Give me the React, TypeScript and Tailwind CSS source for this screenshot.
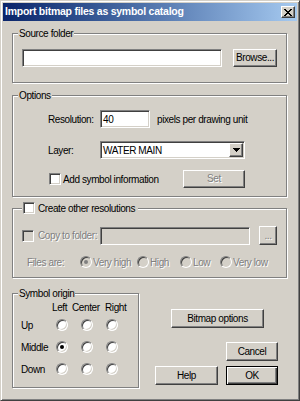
import React from 'react'

const face = 'bg-[#D4D0C8]'
const raised =
  'border border-t-white border-l-white border-r-[#404040] border-b-[#404040] shadow-[inset_-1px_-1px_0_#808080]'
const raisedDefault =
  'border border-black shadow-[inset_1px_1px_0_#fff,inset_-1px_-1px_0_#404040,inset_-2px_-2px_0_#808080]'
const sunken =
  'border border-t-[#808080] border-l-[#808080] border-r-white border-b-white shadow-[inset_1px_1px_0_#404040,inset_-1px_-1px_0_#D4D0C8]'
const disabledText = 'text-[#808080] [text-shadow:1px_1px_0_#fff]'

function Btn({
  children,
  className = '',
  disabled = false,
  isDefault = false,
}: {
  children: React.ReactNode
  className?: string
  disabled?: boolean
  isDefault?: boolean
}) {
  return (
    <button
      type="button"
      className={`flex items-center justify-center leading-none ${face} ${isDefault ? raisedDefault : raised} ${disabled ? disabledText : ''} ${className}`}
    >
      {children}
    </button>
  )
}

function Check({ disabled = false }: { disabled?: boolean }) {
  return (
    <span
      className={`block h-[12px] w-[12px] shrink-0 ${sunken} ${disabled ? face : 'bg-white'}`}
    />
  )
}

function Radio({ checked = false, disabled = false }: { checked?: boolean; disabled?: boolean }) {
  return (
    <span
      className={`flex h-[12px] w-[12px] shrink-0 items-center justify-center rounded-full border border-t-[#808080] border-l-[#808080] border-r-white border-b-white shadow-[inset_1px_1px_0_#404040,inset_-1px_-1px_0_#D4D0C8] ${disabled ? face : 'bg-white'}`}
    >
      {checked && (
        <span className={`block h-[4px] w-[4px] rounded-full ${disabled ? 'bg-[#808080]' : 'bg-black'}`} />
      )}
    </span>
  )
}

function Group({
  title,
  className = '',
  children,
}: {
  title: React.ReactNode
  className?: string
  children?: React.ReactNode
}) {
  return (
    <div
      className={`relative border border-[#808080] shadow-[inset_1px_1px_0_#fff,1px_1px_0_#fff] ${className}`}
    >
      <div className={`absolute left-[5px] top-[-8px] flex h-[14px] items-center px-[1px] ${face}`}>
        {title}
      </div>
      {children}
    </div>
  )
}

export default function App() {
  return (
    <div
      className={`h-[401px] w-[300px] ${face} border border-t-[#D4D0C8] border-l-[#D4D0C8] border-r-[#404040] border-b-[#404040] p-[2px] shadow-[inset_1px_1px_0_#fff,inset_-1px_-1px_0_#808080] font-['Liberation_Sans',Arial,sans-serif] text-[10px] tracking-[-0.4px] whitespace-nowrap text-black`}
    >
      {/* Title bar */}
      <div className="flex h-[18px] items-center justify-between bg-linear-to-r from-[#0A246A] to-[#A6CAF0] px-[2px]">
        <span className="text-[10.5px] font-bold tracking-[-0.25px] text-white">
          Import bitmap files as symbol catalog
        </span>
        <Btn className="h-[12px] w-[14px]">
          <svg width="8" height="7" viewBox="0 0 8 7" shapeRendering="crispEdges">
            {[0, 1, 2, 3, 4, 5, 6].map(i => (
              <g key={i} fill="#000">
                <rect x={i} y={i} width="2" height="1" />
                <rect x={6 - i} y={i} width="2" height="1" />
              </g>
            ))}
          </svg>
        </Btn>
      </div>

      <div className="flex flex-col pl-[9px]">
        {/* Source folder */}
        <Group title="Source folder" className="mt-[12px] h-[50px] w-[275px]">
          <div className="flex items-center pl-[9px] pt-[15px]">
            <div className={`h-[18px] w-[200px] bg-white ${sunken}`} />
            <Btn className="ml-[11px] h-[18px] w-[44px]">Browse...</Btn>
          </div>
        </Group>

        {/* Options */}
        <Group title="Options" className="mt-[12px] h-[102px] w-[275px]">
          <div className="flex flex-col pl-[35px] pt-[14px]">
            <div className="flex h-[18px] items-center">
              <span className="w-[52px]">Resolution:</span>
              <div className={`flex h-[18px] w-[50px] items-center bg-white pl-[2px] ${sunken}`}>40</div>
              <span className="ml-[7px]">pixels per drawing unit</span>
            </div>
            <div className="mt-[13px] flex h-[18px] items-center">
              <span className="w-[52px]">Layer:</span>
              <div className={`flex h-[18px] w-[145px] items-center bg-white ${sunken}`}>
                <span className="flex-1 pl-[2px]">WATER MAIN</span>
                <span className={`mr-[1px] flex h-[14px] w-[14px] items-center justify-center ${face} ${raised}`}>
                  <svg width="7" height="4" viewBox="0 0 7 4" shapeRendering="crispEdges">
                    <path d="M0 0h7v1h-1v1h-1v1h-1v1h-1v-1h-1v-1h-1v-1h-1z" fill="#000" />
                  </svg>
                </span>
              </div>
            </div>
            <div className="mt-[11px] flex h-[18px] items-center pl-[1px]">
              <Check />
              <span className="ml-[2px] w-[120px]">Add symbol information</span>
              <Btn disabled className="h-[18px] w-[62px]">Set</Btn>
            </div>
          </div>
        </Group>

        {/* Create other resolutions */}
        <Group
          title={
            <span className="flex items-center">
              <Check />
              <span className="ml-[3px] pr-[2px]">Create other resolutions</span>
            </span>
          }
          className="mt-[11px] h-[70px] w-[275px] [&>div:first-child]:left-[9px]"
        >
          <div className="flex flex-col pl-[9px] pt-[17px]">
            <div className="flex h-[19px] items-center">
              <Check disabled />
              <span className={`ml-[4px] w-[62px] ${disabledText}`}>Copy to folder:</span>
              <div className={`h-[18px] w-[150px] ${face} ${sunken}`} />
              <Btn disabled className="ml-[9px] h-[19px] w-[18px]">...</Btn>
            </div>
            <div className={`mt-[11px] flex h-[12px] items-center pl-[5px] ${disabledText}`}>
              <span className="w-[53px]">Files are:</span>
              <span className="flex w-[57px] items-center">
                <Radio checked disabled />
                <span className="ml-[1px]">Very high</span>
              </span>
              <span className="flex w-[43px] items-center">
                <Radio disabled />
                <span className="ml-[1px]">High</span>
              </span>
              <span className="flex w-[40px] items-center">
                <Radio disabled />
                <span className="ml-[1px]">Low</span>
              </span>
              <span className="flex items-center">
                <Radio disabled />
                <span className="ml-[1px]">Very low</span>
              </span>
            </div>
          </div>
        </Group>

        {/* Symbol origin + buttons */}
        <div className="mt-[15px] flex items-start">
          <Group title="Symbol origin" className="h-[95px] w-[127px]">
            <div className="grid grid-cols-[28px_25px_25px_25px] grid-rows-[13px_22px_22px_22px] items-center pl-[8px] pt-[7px]">
              <span />
              <span className="pl-[3px]">Left</span>
              <span className="ml-[-2px]">Center</span>
              <span className="pl-[6px]">Right</span>
              {['Up', 'Middle', 'Down'].map(row => (
                <React.Fragment key={row}>
                  <span>{row}</span>
                  {[0, 1, 2].map(c => (
                    <span key={c} className="flex justify-center">
                      <Radio checked={row === 'Middle' && c === 0} />
                    </span>
                  ))}
                </React.Fragment>
              ))}
            </div>
          </Group>

          <div className="flex flex-col pl-[32px]">
            <Btn className="mt-[16px] h-[19px] w-[93px]">Bitmap options</Btn>
            <Btn className="ml-[55px] mt-[14px] h-[19px] w-[52px]">Cancel</Btn>
            <div className="mt-[5px] flex">
              <Btn className="ml-[-16px] h-[19px] w-[63px]">Help</Btn>
              <Btn isDefault className="ml-[8px] h-[19px] w-[52px]">OK</Btn>
            </div>
          </div>
        </div>
      </div>
    </div>
  )
}
